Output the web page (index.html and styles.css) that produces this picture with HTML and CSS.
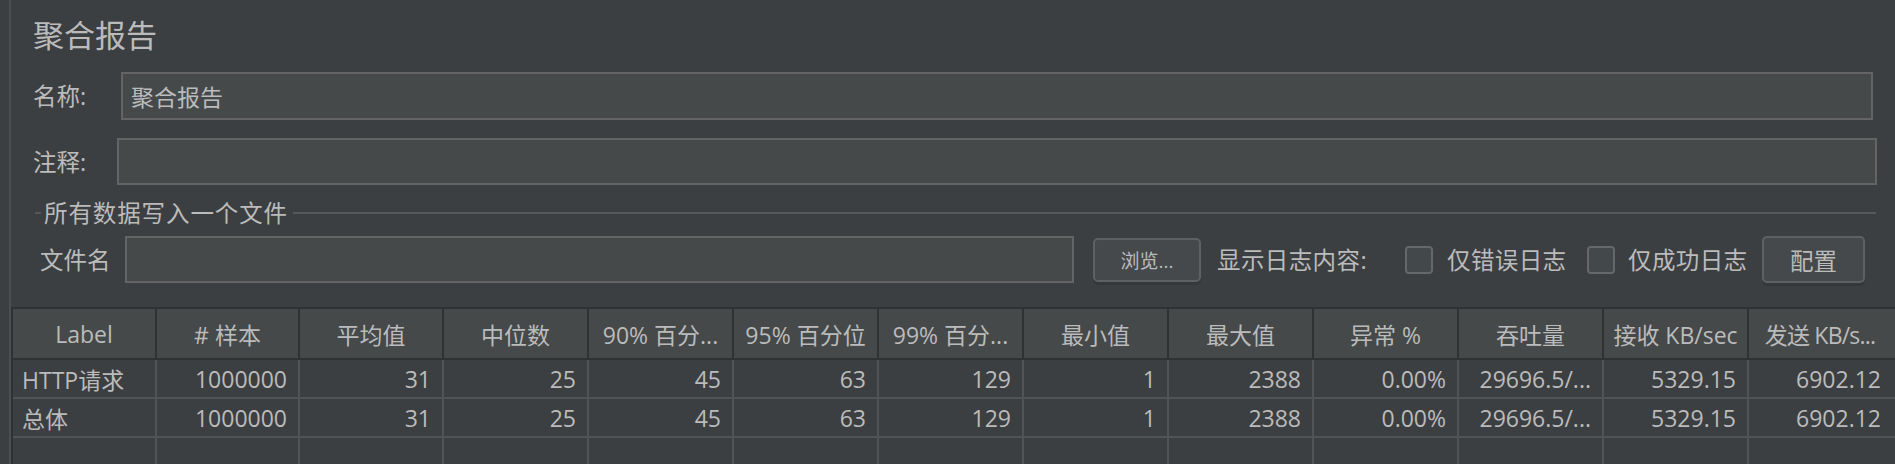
FILE: index.html
```html
<!DOCTYPE html>
<html lang="zh-CN">
<head>
<meta charset="utf-8">
<title>聚合报告</title>
<link rel="stylesheet" href="styles.css">
</head>
<body>
<div class="panel">
  <div class="title">聚合报告</div>

  <div class="row row-name">
    <span class="lbl lbl-name">名称:</span>
    <div class="field field-name">聚合报告</div>
  </div>

  <div class="row row-comment">
    <span class="lbl lbl-comment">注释:</span>
    <div class="field field-comment"></div>
  </div>

  <div class="section">
    <span class="dash"></span>
    <span class="section-text">所有数据写入一个文件</span>
    <span class="line"></span>
  </div>

  <div class="row row-file">
    <span class="lbl lbl-file">文件名</span>
    <div class="field field-file"></div>
    <div class="btn btn-browse">浏览...</div>
    <span class="txt txt-log">显示日志内容:</span>
    <span class="cb"></span>
    <span class="txt txt-err">仅错误日志</span>
    <span class="cb"></span>
    <span class="txt txt-ok">仅成功日志</span>
    <div class="btn btn-config">配置</div>
  </div>

  <div class="grid">
    <div class="th">Label</div>
    <div class="th"># 样本</div>
    <div class="th">平均值</div>
    <div class="th">中位数</div>
    <div class="th">90% 百分...</div>
    <div class="th">95% 百分位</div>
    <div class="th">99% 百分...</div>
    <div class="th">最小值</div>
    <div class="th">最大值</div>
    <div class="th">异常 %</div>
    <div class="th">吞吐量</div>
    <div class="th">接收 KB/sec</div>
    <div class="th th-tight">发送 KB/s...</div>

    <div class="td td-label">HTTP请求</div>
    <div class="td">1000000</div>
    <div class="td">31</div>
    <div class="td">25</div>
    <div class="td">45</div>
    <div class="td">63</div>
    <div class="td">129</div>
    <div class="td">1</div>
    <div class="td">2388</div>
    <div class="td">0.00%</div>
    <div class="td">29696.5/...</div>
    <div class="td">5329.15</div>
    <div class="td">6902.12</div>

    <div class="td td-label">总体</div>
    <div class="td">1000000</div>
    <div class="td">31</div>
    <div class="td">25</div>
    <div class="td">45</div>
    <div class="td">63</div>
    <div class="td">129</div>
    <div class="td">1</div>
    <div class="td">2388</div>
    <div class="td">0.00%</div>
    <div class="td">29696.5/...</div>
    <div class="td">5329.15</div>
    <div class="td">6902.12</div>

    <div class="td td-label"></div>
    <div class="td"></div>
    <div class="td"></div>
    <div class="td"></div>
    <div class="td"></div>
    <div class="td"></div>
    <div class="td"></div>
    <div class="td"></div>
    <div class="td"></div>
    <div class="td"></div>
    <div class="td"></div>
    <div class="td"></div>
    <div class="td"></div>
  </div>
</div>
</body>
</html>
```

FILE: styles.css
```css
* { box-sizing: border-box; }

html, body {
  margin: 0;
  padding: 0;
  width: 1895px;
  height: 464px;
  overflow: hidden;
  background: #3c3f41;
}

body {
  font-family: "Open Sans", "Noto Sans CJK SC", sans-serif;
  font-size: 23.5px;
  color: #bbbbbb;
}

.panel {
  margin-left: 9px;
  height: 464px;
  border-left: 2px solid #4c4f52;
  display: flex;
  flex-direction: column;
}

.panel > * {
  flex-shrink: 0;
}

.title {
  padding-top: 17px;
  padding-left: 22px;
  font-size: 31px;
  line-height: 36px;
  height: 53px;
}

.row {
  display: flex;
  align-items: center;
}

.row-name {
  margin-top: 19px;
  height: 48px;
  padding-left: 22px;
  padding-right: 22px;
}

.row-comment {
  margin-top: 18px;
  height: 47px;
  padding-left: 22px;
  padding-right: 18px;
}

.lbl {
  white-space: nowrap;
  line-height: 30px;
  flex: none;
}

.lbl-name { width: 88px; }
.lbl-comment { width: 84px; }
.lbl-file { width: 85px; }

.field {
  flex: 1;
  height: 100%;
  background: #45494a;
  border: 2px solid #646464;
  display: flex;
  align-items: center;
  padding-left: 8px;
  font-size: 23px;
}

.section {
  margin-top: 16px;
  height: 24px;
  display: flex;
  align-items: center;
  padding-left: 24px;
  padding-right: 19px;
}

.dash {
  width: 6px;
  height: 2px;
  background: #555859;
}

.section-text {
  margin-left: 3px;
  white-space: nowrap;
  letter-spacing: 0.9px;
  line-height: 24px;
}

.line {
  flex: 1;
  height: 2px;
  margin-left: 5px;
  background: #555859;
}

.row-file {
  margin-top: 11px;
  height: 47px;
  padding-left: 29px;
  padding-right: 30px;
}

.field-file {
  height: 47px;
}

.btn {
  display: flex;
  align-items: center;
  justify-content: center;
  background: #45494b;
  border: 2px solid #5e6163;
  border-radius: 5px;
  box-shadow: 0 3px 0 #35383a;
  white-space: nowrap;
  flex: none;
}

.btn-browse {
  margin-left: 19px;
  width: 108px;
  height: 44px;
  font-size: 19px;
}

.btn-config {
  width: 103px;
  height: 47px;
}

.txt {
  white-space: nowrap;
  line-height: 30px;
  flex: none;
  letter-spacing: 0.4px;
}

.txt-log { margin-left: 16px; width: 188px; }
.txt-err { margin-left: 14px; width: 140px; }
.txt-ok { margin-left: 13px; width: 134px; }

.cb {
  width: 28px;
  height: 28px;
  flex: none;
  background: #43484a;
  border: 2px solid #656769;
  border-radius: 4px;
}

.grid {
  margin-top: 24px;
  display: grid;
  grid-template-columns: 144px 143px 144px repeat(9, 145px) 148px;
  grid-template-rows: 51px 39px 39px 39px;
  border-top: 2px solid #2f3133;
  border-left: 2px solid #2f3133;
  font-size: 23px;
}

.th {
  background: #45494a;
  border-right: 2px solid #2f3133;
  border-bottom: 2px solid #2f3133;
  display: flex;
  align-items: center;
  justify-content: center;
  white-space: nowrap;
  overflow: hidden;
}

.th-tight {
  letter-spacing: -0.8px;
  padding-right: 4px;
}

.td {
  background: #3c3f41;
  border-right: 2px solid #515456;
  border-bottom: 2px solid #515456;
  display: flex;
  align-items: center;
  justify-content: flex-end;
  padding-right: 11px;
  white-space: nowrap;
  overflow: hidden;
}

.td:nth-child(13n) {
  padding-right: 14px;
}

.td-label {
  justify-content: flex-start;
  padding-left: 9px;
  padding-right: 0;
}
```
